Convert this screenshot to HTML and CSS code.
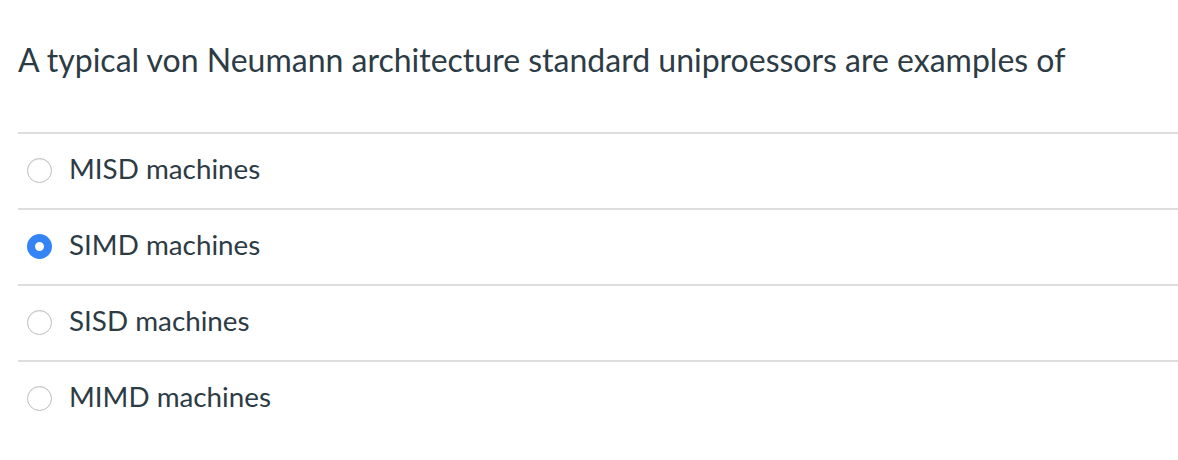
FILE: index.html
```html
<!DOCTYPE html>
<html>
<head>
<meta charset="utf-8">
<link rel="stylesheet" href="styles.css">
</head>
<body>
<div class="quiz">
  <h1 class="question">A typical von Neumann architecture standard uniproessors are examples of</h1>
  <div class="answers">
    <label class="answer"><span class="radio"></span><span class="label">MISD machines</span></label>
    <label class="answer"><span class="radio checked"></span><span class="label">SIMD machines</span></label>
    <label class="answer"><span class="radio"></span><span class="label">SISD machines</span></label>
    <label class="answer"><span class="radio"></span><span class="label">MIMD machines</span></label>
  </div>
</div>
</body>
</html>
```
FILE: styles.css
```css
html, body {
  margin: 0;
  padding: 0;
  background: #ffffff;
}
.quiz {
  padding-left: 18px;
  font-family: Lato, "Open Sans", sans-serif;
  color: #2d3b45;
}
.question {
  margin: 41px 0 53px;
  font-size: 32px;
  font-weight: 400;
  line-height: 1.2;
}
.answers {
  display: flex;
  flex-direction: column;
}
.answer {
  display: flex;
  align-items: center;
  box-sizing: border-box;
  height: 76px;
  padding-bottom: 5px;
  border-top: 2px solid #dddddd;
}
.radio {
  box-sizing: border-box;
  width: 25px;
  height: 25px;
  margin: 3px 17px 0 9px;
  border-radius: 50%;
  border: 1px solid #bdbdbd;
  background: #ffffff;
  box-shadow: inset 0 1px 1px rgba(0,0,0,0.06);
  flex: none;
}
.radio.checked {
  border: 8px solid #3584f6;
  background: #ffffff;
  box-shadow: none;
}
.label {
  font-size: 27.8px;
  line-height: 1.2;
}
```
